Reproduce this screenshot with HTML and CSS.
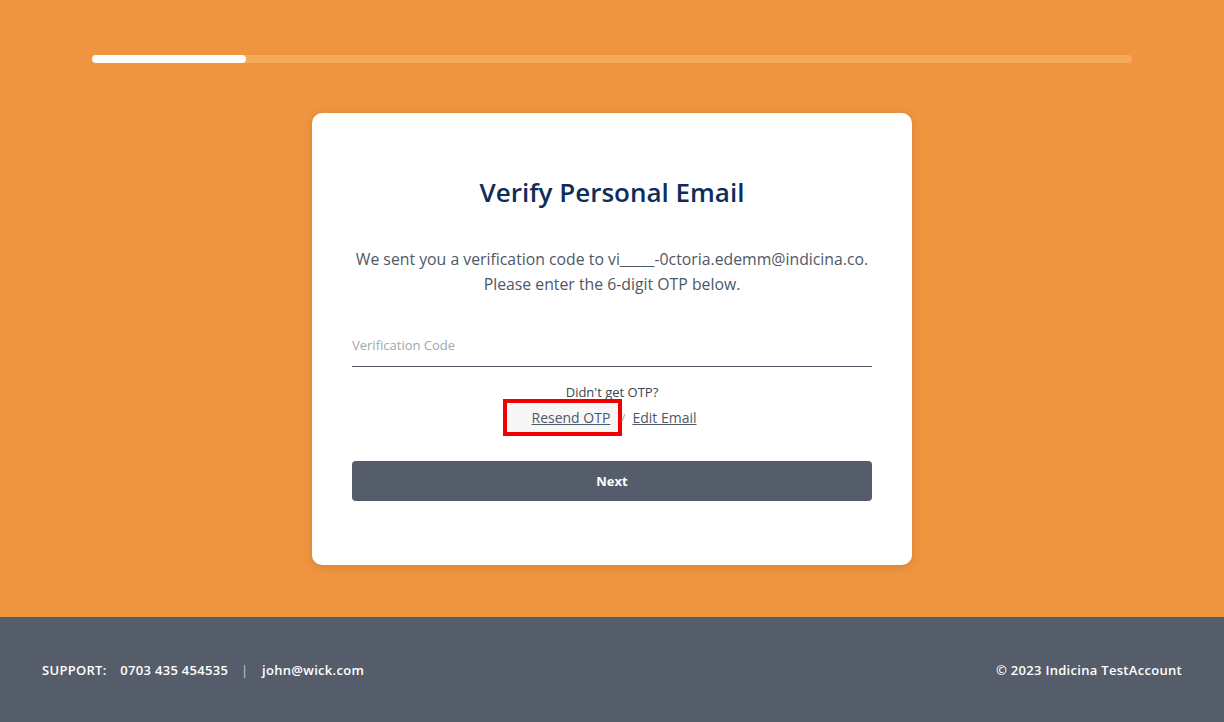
FILE: index.html
```html
<!DOCTYPE html>
<html lang="en">
<head>
  <meta charset="UTF-8" />
  <meta name="viewport" content="width=device-width, initial-scale=1.0" />
  <title>Verify Personal Email</title>
  <link rel="stylesheet" href="styles.css">
</head>
<body>
  <div id="page">
    <main id="main">
      <div class="progress">
        <div class="progress-fill" style="width: 14.8%"></div>
      </div>

      <div class="card">
        <h1>Verify Personal Email</h1>
        <p class="intro">
          We sent you a verification code to vi_____-0ctoria.edemm@indicina.co.<br>
          Please enter the 6-digit OTP below.
        </p>
        <form id="otpForm">
          <input type="text" class="code-input" placeholder="Verification Code" />
          <p class="resend">Didn't get OTP?</p>
          <div class="links">
            <span class="highlight"><a href="#">Resend OTP</a></span>
            <span class="slash">/</span>
            <a href="#">Edit Email</a>
          </div>
          <button type="button" class="next-btn">Next</button>
        </form>
      </div>
    </main>

    <footer id="footer">
      <div class="support">
        <span>SUPPORT:</span>
        <span>0703 435 454535</span>
        <span class="sep">|</span>
        <span>john@wick.com</span>
      </div>
      <div class="copy">&copy; 2023 Indicina TestAccount</div>
    </footer>
  </div>
</body>
</html>
```

FILE: styles.css
```css
body {
  font-family: "Open Sans", "Liberation Sans", sans-serif;
  margin: 0;
  padding: 0;
  background-color: #ef9540;
}

#page {
  min-height: 722px;
  display: flex;
  flex-direction: column;
}

#main {
  flex: 1;
  padding: 55px 92px 0;
}

.progress {
  height: 8px;
  border-radius: 4px;
  background-color: #f4aa56;
}

.progress-fill {
  height: 8px;
  border-radius: 4px;
  background-color: #fff;
}

.card {
  width: 520px;
  margin: 50px auto 0;
  padding: 57px 40px 64px;
  background-color: #fff;
  border-radius: 10px;
  box-shadow: 0 2px 10px rgba(0, 0, 0, 0.12);
  text-align: center;
}

h1 {
  margin: 0;
  font-size: 26px;
  line-height: 44px;
  font-weight: 600;
  color: #0f2d59;
}

.intro {
  margin: 33px 0 0;
  font-size: 15.8px;
  line-height: 25px;
  color: #4e5867;
}

.code-input {
  display: block;
  width: 100%;
  box-sizing: border-box;
  margin-top: 39px;
  padding: 0 0 12px;
  border: none;
  border-bottom: 1px solid #545c69;
  font-family: inherit;
  font-size: 13px;
  outline: none;
}

.code-input::placeholder {
  color: #a2a7ae;
}

.resend {
  margin: 17px 0 0;
  font-size: 13px;
  line-height: 16px;
  color: #3e4450;
}

.links {
  display: flex;
  justify-content: center;
  align-items: center;
  gap: 7px;
  margin: -1px 0 0 -25px;
  font-size: 14px;
}

.links a {
  color: #4e5867;
}

.highlight {
  display: inline-block;
  padding: 5px 8px 5px 25px;
  border: 4px solid #f00000;
  background-color: #f7f7f7;
}

.slash {
  color: #9aa0a8;
  font-size: 11px;
  margin-left: -8px;
}

.next-btn {
  display: block;
  width: 100%;
  height: 40px;
  margin-top: 25px;
  border: none;
  border-radius: 4px;
  background-color: #565d6a;
  color: #fff;
  font-family: inherit;
  font-size: 13px;
  font-weight: 700;
  cursor: pointer;
}

#footer {
  height: 105px;
  padding: 0 42px;
  display: flex;
  justify-content: space-between;
  align-items: center;
  background-color: #565d6a;
  color: #fff;
  font-size: 13px;
  font-weight: 600;
  letter-spacing: 0.3px;
}

.support span {
  margin-right: 8px;
}

.support span:first-child {
  margin-right: 10px;
}

.support .sep {
  margin: 0 10px 0 1px;
  color: #c9ccd1;
  font-weight: 400;
}
```
